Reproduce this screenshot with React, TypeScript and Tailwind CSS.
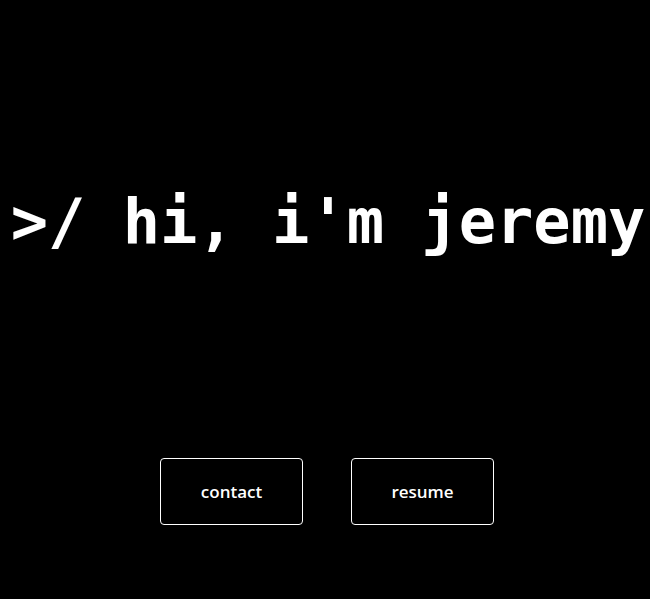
export default function App() {
  return (
    <main className="min-h-[599px] w-full bg-black text-white flex flex-col items-center overflow-hidden">
      <h1 className="mt-[176px] pl-[6px] whitespace-nowrap text-center font-bold leading-[92px] text-[62px] [font-family:'DejaVu_Sans_Mono',monospace]">
        &gt;/ hi, i'm jeremy
      </h1>

      <div className="mt-[190px] flex gap-[48px] pl-[4px]">
        <button className="w-[143px] h-[67px] rounded-[4px] border border-white text-[17px] font-semibold [font-family:'Open_Sans',sans-serif]">
          contact
        </button>
        <button className="w-[143px] h-[67px] rounded-[4px] border border-white text-[17px] font-semibold [font-family:'Open_Sans',sans-serif]">
          resume
        </button>
      </div>
    </main>
  );
}
